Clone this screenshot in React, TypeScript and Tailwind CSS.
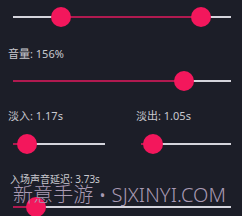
import React from "react";

type SliderProps = {
    width: number;
    from?: number;
    to: number;
    range?: boolean;
};

const Thumb = ({ left }: { left: number }) => (
    <div
        className="absolute top-1/2 w-5 h-5 -mt-2.5 -ml-2.5 rounded-full bg-[#f3175c]"
        style={{ left }}
    />
);

const Slider = ({ width, from = 0, to, range = false }: SliderProps) => (
    <div className="relative h-5" style={{ width }}>
        <div className="absolute left-0 right-0 top-1/2 h-[2px] -mt-px bg-[#d4d4dc]" />
        <div
            className="absolute top-1/2 h-[2px] -mt-px bg-[#b01a50]"
            style={{ left: from, width: to - from }}
        />
        {range && <Thumb left={from} />}
        <Thumb left={to} />
    </div>
);

const Label = ({ children, className = "" }: { children: React.ReactNode; className?: string }) => (
    <div className={`text-[11px] leading-4 text-[#c9c9cf] ${className}`}>{children}</div>
);

export default function App() {
    return (
        <div
            className="relative w-[242px] h-[216px] overflow-hidden bg-[#1c1e28] pt-[7px]"
            style={{ fontFamily: '"Noto Sans", "Noto Sans CJK SC", sans-serif' }}
        >
            <div className="pl-[13px]">
                <Slider width={218} from={48} to={188} range />
            </div>

            <Label className="pl-[8px] mt-[19px]">音量: 156%</Label>

            <div className="pl-[13px] mt-[9px]">
                <Slider width={218} to={171} />
            </div>

            <div className="flex mt-[17px]">
                <Label className="pl-[8px] w-[136px]">淡入: 1.17s</Label>
                <Label>淡出: 1.05s</Label>
            </div>

            <div className="flex mt-[10px] pl-[13px]">
                <Slider width={92} to={14} />
                <div className="ml-[36px]">
                    <Slider width={90} to={12} />
                </div>
            </div>

            <div className="pl-[10px] mt-[18px] text-[10px] leading-[14px] text-[#c9c9cf]">
                入场声音延迟: 3.73s
            </div>

            <div className="pl-[13px] mt-[11px]">
                <Slider width={218} to={23} />
            </div>

            {/* watermark over the page */}
            <div className="absolute left-[13px] top-[181px] text-[20px] leading-7 font-light tracking-[0.1px] text-[#a99ab3] whitespace-nowrap">
                新意手游 • SJXINYI.COM
            </div>
        </div>
    );
}
